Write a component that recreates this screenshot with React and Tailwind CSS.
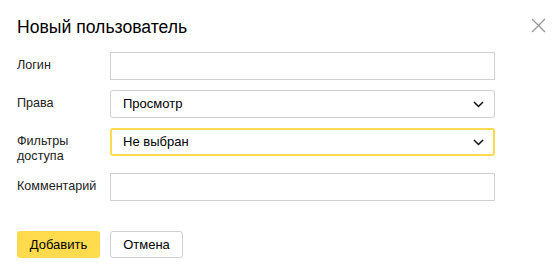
const fieldBase =
  'h-[28px] w-[385px] border border-[#d0d0d0] bg-white text-[13px] text-black';

function Chevron() {
  return (
    <svg width="11" height="7" viewBox="0 0 11 7" className="shrink-0">
      <path d="M1 1l4.5 4.5L10 1" fill="none" stroke="#111" strokeWidth="1.5" />
    </svg>
  );
}

function Row({ label, children, tall }) {
  return (
    <div className={`flex items-start ${tall ? 'h-[35px]' : 'h-[28px]'}`}>
      <div className="w-[93px] shrink-0 pt-[6px] text-[12.6px] leading-[15px] text-[#222]">{label}</div>
      {children}
    </div>
  );
}

export default function App() {
  return (
    <div
      className="relative h-[275px] w-[556px] bg-white px-[17px] pt-[15px]"
      style={{ fontFamily: '"Liberation Sans", Arial, sans-serif' }}
    >
      <h1 className="text-[17.6px] leading-[24px] text-black">Новый пользователь</h1>

      <button className="absolute right-[10px] top-[18px] text-[#999]">
        <svg width="15" height="15" viewBox="0 0 15 15">
          <path d="M1 1l13 13M14 1L1 14" stroke="#9a9a9a" strokeWidth="1.4" />
        </svg>
      </button>

      <div className="mt-[13px] flex flex-col gap-[10px]">
        <Row label="Логин">
          <div className={fieldBase} />
        </Row>
        <Row label="Права">
          <div className={`${fieldBase} flex items-center justify-between rounded-[3px] pl-[12px] pr-[10px]`}>
            <span>Просмотр</span>
            <Chevron />
          </div>
        </Row>
        <Row label={<>Фильтры<br />доступа</>} tall>
          <div className="flex h-[28px] w-[385px] items-center justify-between rounded-[3px] border-2 border-[#ffdb4d] bg-white pl-[11px] pr-[9px] text-[13px] text-black">
            <span>Не выбран</span>
            <Chevron />
          </div>
        </Row>
        <Row label="Комментарий">
          <div className={fieldBase} />
        </Row>
      </div>

      <div className="mt-[30px] flex gap-[10px]">
        <button className="h-[27px] w-[83px] rounded-[3px] bg-[#ffdb4d] text-[13px] text-black">Добавить</button>
        <button className="h-[27px] w-[73px] rounded-[3px] border border-[#d0d0d0] bg-white text-[13px] text-black">
          Отмена
        </button>
      </div>
    </div>
  );
}
